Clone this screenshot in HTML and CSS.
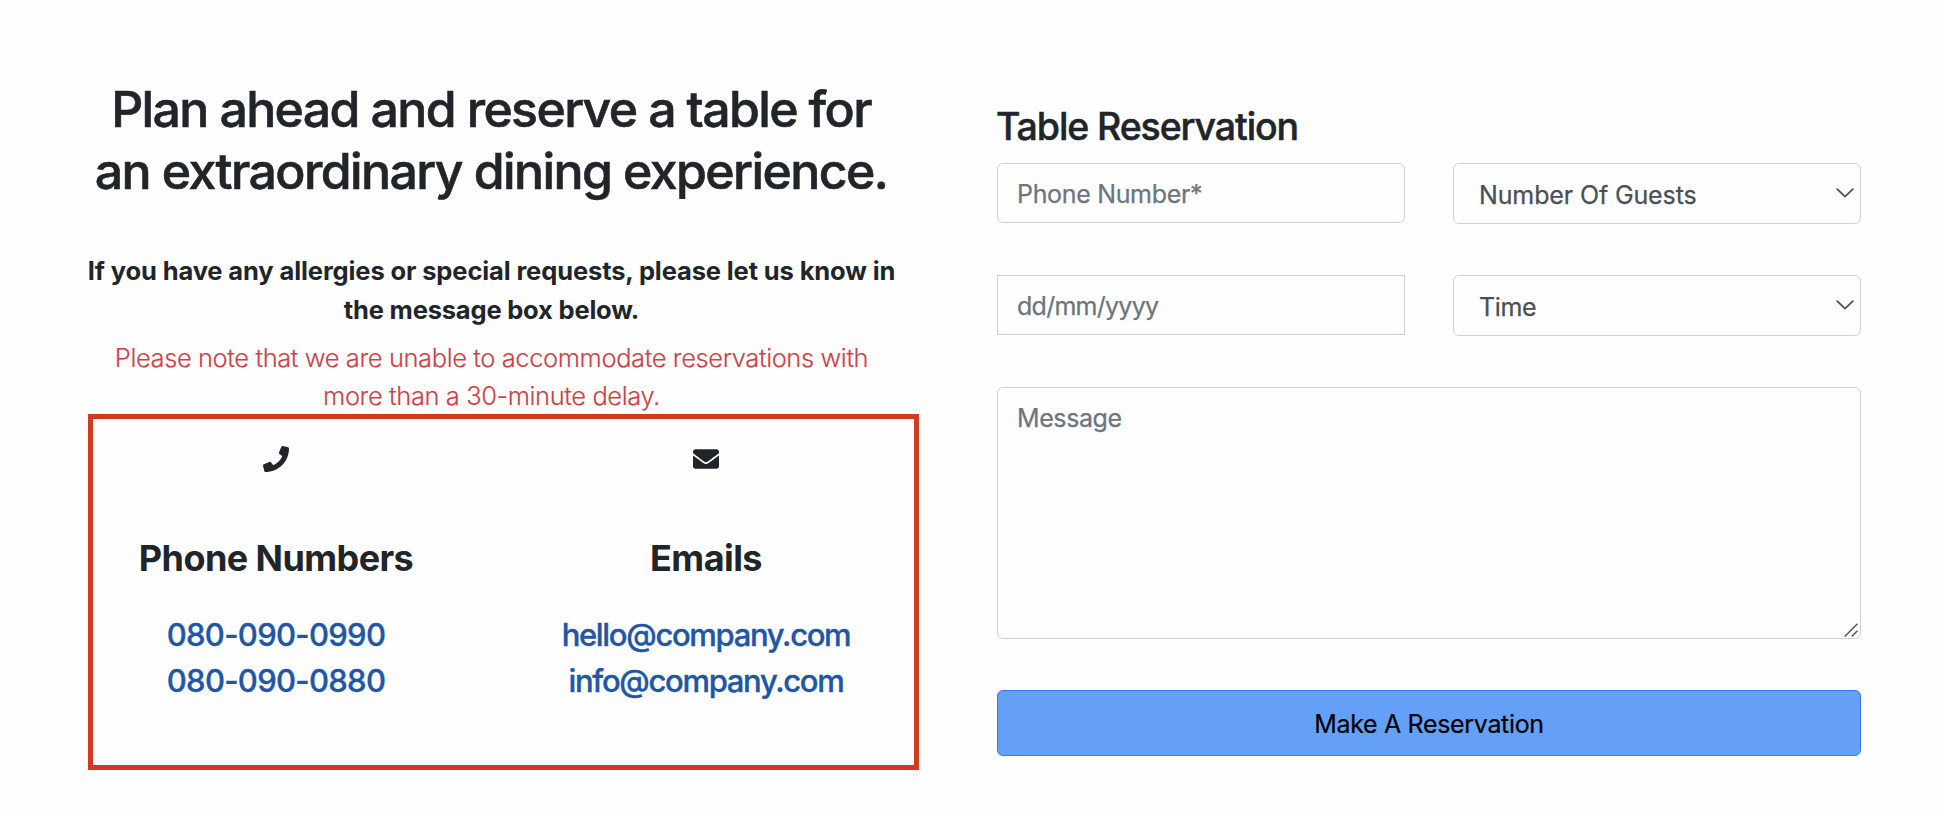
FILE: index.html
```
<!DOCTYPE html>
<html lang="en">
<head>
<meta charset="utf-8">
<title>Table Reservation</title>
<link rel="stylesheet" href="styles.css">
</head>
<body>
<main class="page">
  <section class="intro">
    <h1 class="intro-title"><span class="title-first">Plan ahead and reserve a table for</span><br>an extraordinary dining experience.</h1>
    <p class="intro-lead">If you have any allergies or special requests, please let us know in<br><span class="lead-last">the message box below.</span></p>
    <p class="intro-note">Please note that we are unable to accommodate reservations with<br>more than a 30-minute delay.</p>
    <div class="contacts">
      <div class="contact">
        <svg class="contact-icon" viewBox="0 0 512 512" aria-hidden="true"><path d="M493.4 24.6l-104-24c-11.3-2.6-22.9 3.3-27.5 13.9l-48 112c-4.2 9.8-1.4 21.3 6.9 28l60.6 49.6c-36 76.7-98.9 140.5-177.2 177.2l-49.6-60.6c-6.8-8.3-18.2-11.1-28-6.9l-112 48C3.9 366.5-2 378.1.6 389.4l24 104C27.1 504.2 36.7 512 48 512c256.1 0 464-207.5 464-464 0-11.2-7.7-20.9-18.6-23.4z"/></svg>
        <h2 class="contact-title">Phone Numbers</h2>
        <a class="contact-link phone" href="#">080-090-0990</a>
        <a class="contact-link phone" href="#">080-090-0880</a>
      </div>
      <div class="contact">
        <svg class="contact-icon" viewBox="0 0 512 512" aria-hidden="true"><path d="M502.3 190.8c3.9-3.1 9.7-.2 9.7 4.7V400c0 26.5-21.5 48-48 48H48c-26.5 0-48-21.5-48-48V195.6c0-5 5.7-7.8 9.7-4.7 22.4 17.4 52.1 39.5 154.1 113.6 21.1 15.4 56.7 47.8 92.2 47.6 35.7.3 72-32.8 92.3-47.6 102-74.1 131.6-96.3 154-113.7zM256 320c23.2.4 56.6-29.2 73.4-41.4 132.7-96.3 142.8-104.7 173.4-128.7 5.8-4.5 9.2-11.5 9.2-18.9v-19c0-26.5-21.5-48-48-48H48c-26.5 0-48 21.5-48 48v19c0 7.4 3.4 14.3 9.2 18.9 30.6 23.9 40.7 32.4 173.4 128.7 16.8 12.2 50.2 41.8 73.4 41.4z"/></svg>
        <h2 class="contact-title">Emails</h2>
        <a class="contact-link" href="#">hello@company.com</a>
        <a class="contact-link" href="#">info@company.com</a>
      </div>
    </div>
  </section>

  <form class="reservation">
    <h2 class="form-title">Table Reservation</h2>
    <div class="fields">
      <input class="control" type="text" placeholder="Phone Number*" aria-label="Phone Number">
      <div class="select-wrap">
        <select class="control select guests" aria-label="Number Of Guests"><option>Number Of Guests</option></select>
        <svg class="chevron" viewBox="0 0 18 10" aria-hidden="true"><path d="M1.2 1.2 9 8.6l7.8-7.4"/></svg>
      </div>
      <input class="control date" type="text" placeholder="dd/mm/yyyy" aria-label="Date">
      <div class="select-wrap">
        <select class="control select" aria-label="Time"><option>Time</option></select>
        <svg class="chevron" viewBox="0 0 18 10" aria-hidden="true"><path d="M1.2 1.2 9 8.6l7.8-7.4"/></svg>
      </div>
      <div class="message-wrap">
        <textarea class="control message" placeholder="Message" aria-label="Message"></textarea>
        <svg class="grip" viewBox="0 0 14 14" aria-hidden="true"><path d="M.7 13.5 13.5.7M7.7 13.5l5.8-5.8"/></svg>
      </div>
      <button class="submit" type="button">Make A Reservation</button>
    </div>
  </form>
</main>
</body>
</html>
```
FILE: styles.css
```
* { box-sizing: border-box; }

body {
  margin: 0;
  background: #fefefe;
  color: #212529;
  font-family: Inter, "Liberation Sans", sans-serif;
}

h1, h2, p { margin: 0; }

.page {
  display: flex;
  gap: 75px;
  height: 814px;
  padding-left: 61px;
}

.intro {
  width: 861px;
  padding-top: 78px;
  text-align: center;
  white-space: nowrap;
}

.intro-title {
  margin: 0 1px 50px 0;
  font-size: 50px;
  font-weight: 500;
  line-height: 62px;
  letter-spacing: -1.6px;
  -webkit-text-stroke: 0.6px currentColor;
}

.title-first { letter-spacing: -1.643px; }

.intro-lead {
  font-size: 25.5px;
  font-weight: 700;
  line-height: 38.5px;
  letter-spacing: -0.116px;
}

.lead-last { letter-spacing: -0.189px; }

.intro-note {
  margin-top: 10px;
  color: #ca4349;
  font-size: 25.5px;
  font-weight: 300;
  line-height: 38px;
  letter-spacing: -0.41px;
  -webkit-text-stroke: 0.15px currentColor;
}

.contacts {
  display: grid;
  grid-template-columns: 366px 416px;
  justify-content: space-between;
  width: 831px;
  height: 356px;
  margin: -1px 0 0 27px;
  padding-top: 27px;
  border: 5px solid #d03a20;
}

.contact {
  display: flex;
  flex-direction: column;
  align-items: center;
}

.contact-icon {
  width: 26px;
  height: 26px;
  fill: #212529;
}

.contact-title {
  margin: 64px 0 32px;
  font-size: 36px;
  font-weight: 700;
  line-height: 44px;
  letter-spacing: -0.58px;
}

.contact-link {
  color: #2156a5;
  font-size: 31px;
  font-weight: 500;
  line-height: 46px;
  letter-spacing: -1.32px;
  text-decoration: none;
  -webkit-text-stroke: 0.35px currentColor;
}

.contact-link.phone { letter-spacing: -0.69px; }

.reservation {
  width: 864px;
  padding-top: 104px;
}

.form-title {
  margin: 0 0 13px -1px;
  font-size: 37.5px;
  font-weight: 500;
  line-height: 46px;
  letter-spacing: -1.11px;
  -webkit-text-stroke: 0.5px currentColor;
}

.fields {
  display: grid;
  grid-template-columns: 408px 408px;
  gap: 51px 48px;
  align-items: start;
}

.control {
  display: block;
  width: 100%;
  height: 60px;
  margin: 0;
  padding: 1px 18px 0 19px;
  border: 1px solid #ced2d6;
  border-radius: 6px;
  outline: 0;
  background: transparent;
  color: #495057;
  font: 400 25px Inter, "Liberation Sans", sans-serif;
  letter-spacing: -0.33px;
  -webkit-text-stroke: 0.25px currentColor;
}

.control::placeholder { color: #6c757d; opacity: 1; }

.date {
  border-radius: 0;
  letter-spacing: -0.73px;
}

.select-wrap, .message-wrap { position: relative; }

.select {
  height: 61px;
  padding: 2px 40px 0 25px;
  appearance: none;
}

.guests { letter-spacing: -0.13px; }

.chevron {
  position: absolute;
  top: 25px;
  right: 7px;
  width: 18px;
  height: 10px;
  fill: none;
  stroke: #495057;
  stroke-width: 1.7;
  stroke-linecap: round;
  stroke-linejoin: round;
}

.message-wrap, .submit { grid-column: 1 / -1; }

.message {
  height: 252px;
  padding: 11px 19px;
  line-height: 38px;
  letter-spacing: -0.4px;
  resize: none;
}

.grip {
  position: absolute;
  right: 3px;
  bottom: 2px;
  width: 14px;
  height: 14px;
  fill: none;
  stroke: #555;
  stroke-width: 1.5;
}

.submit {
  height: 66px;
  padding: 1px 0 0;
  border: 1px solid #3579f6;
  border-radius: 6px;
  background: #64a0f8;
  color: #000;
  font: 400 25px Inter, "Liberation Sans", sans-serif;
  letter-spacing: -0.33px;
  -webkit-text-stroke: 0.2px currentColor;
}
```
